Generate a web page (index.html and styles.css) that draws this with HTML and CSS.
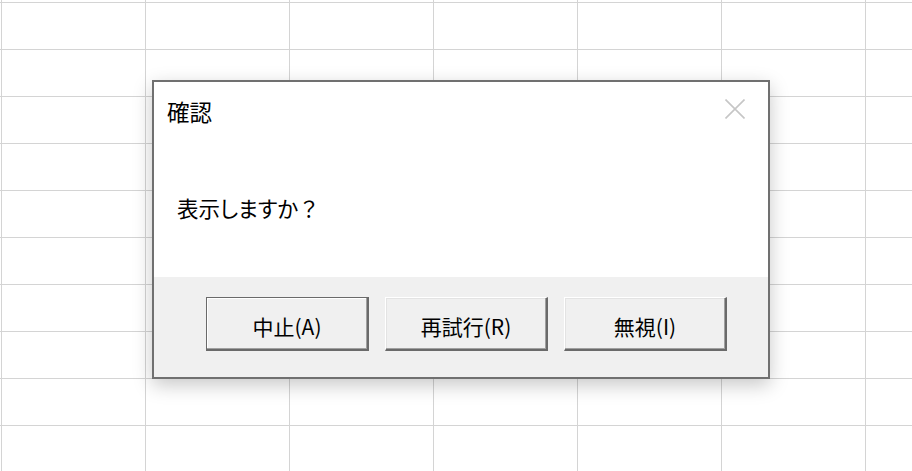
FILE: index.html
```html
<!DOCTYPE html>
<html lang="ja">
<head>
<meta charset="utf-8">
<title>確認</title>
<link rel="stylesheet" href="styles.css">
</head>
<body>
<div class="dialog">
  <div class="titlebar">
    <span class="title">確認</span>
    <span class="close" aria-label="閉じる">
      <svg width="20" height="20" viewBox="0 0 20 20"><path d="M0.5 0.5 L19.5 19.5 M19.5 0.5 L0.5 19.5" stroke="#c6c6c6" stroke-width="1.6" fill="none"/></svg>
    </span>
  </div>
  <div class="content">
    <p class="message">表示しますか<span class="fw">？</span></p>
  </div>
  <div class="footer">
    <button class="btn btn-default">中止(A)</button>
    <button class="btn">再試行(R)</button>
    <button class="btn">無視(I)</button>
  </div>
</div>
</body>
</html>
```

FILE: styles.css
```css
html, body {
  margin: 0;
  height: 100%;
}
body {
  background-color: #ffffff;
  background-image:
    linear-gradient(to right, #d4d4d4 1px, transparent 1px),
    linear-gradient(to bottom, #d4d4d4 1px, transparent 1px);
  background-size: 144px 47px;
  background-position: 1px 2px;
  padding: 80px 0 0 152px;
  box-sizing: border-box;
  font-family: "Noto Sans CJK JP", "Noto Sans", sans-serif;
  font-feature-settings: "palt";
  overflow: hidden;
}
.dialog {
  width: 618px;
  height: 299px;
  box-sizing: border-box;
  border: 2px solid #707070;
  background: #ffffff;
  display: flex;
  flex-direction: column;
  box-shadow: 0 6px 18px rgba(0, 0, 0, 0.22);
}
.titlebar {
  height: 56px;
  display: flex;
  align-items: center;
  justify-content: space-between;
  padding: 0 23px 0 13px;
}
.title {
  font-size: 22.5px;
  line-height: 28px;
  color: #000;
  padding-top: 2px;
}
.close {
  display: flex;
  width: 20px;
  height: 20px;
  margin-top: -2px;
}
.content {
  flex: 1;
  padding-left: 23px;
}
.message {
  margin: 55px 0 0;
  font-size: 21.5px;
  line-height: 30px;
  color: #000;
}
.fw {
  font-feature-settings: normal;
}
.footer {
  height: 100px;
  background: #f0f0f0;
  display: flex;
  justify-content: flex-end;
  align-items: flex-start;
  gap: 16px;
  padding: 20px 41px 0 0;
  box-sizing: border-box;
}
.btn {
  width: 163px;
  height: 54px;
  box-sizing: border-box;
  background: #f0f0f0;
  border-style: solid;
  border-width: 1px 2px 2px 1px;
  border-color: #ffffff #6a6a6a #6a6a6a #ffffff;
  box-shadow: inset -1px -1px 0 #a0a0a0, inset 1px 1px 0 #e3e3e3;
  font-family: "Noto Sans CJK JP", "Noto Sans", sans-serif;
  font-size: 21px;
  color: #000;
  padding: 4px 0 0;
  cursor: default;
}
.btn-default {
  border-color: #6a6a6a;
  border-width: 1px 2px 2px 1px;
  box-shadow: inset -1px -1px 0 #a0a0a0, inset 1px 1px 0 #ffffff;
}
```
